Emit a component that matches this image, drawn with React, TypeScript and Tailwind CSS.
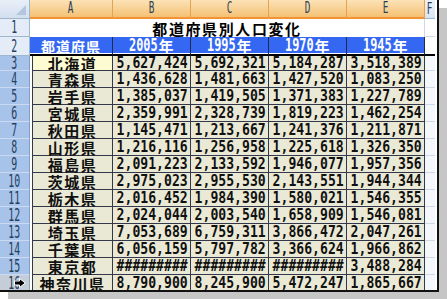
import React from "react";

const rows: string[][] = [
  ["北海道", "5,627,424", "5,692,321", "5,184,287", "3,518,389"],
  ["青森県", "1,436,628", "1,481,663", "1,427,520", "1,083,250"],
  ["岩手県", "1,385,037", "1,419,505", "1,371,383", "1,227,789"],
  ["宮城県", "2,359,991", "2,328,739", "1,819,223", "1,462,254"],
  ["秋田県", "1,145,471", "1,213,667", "1,241,376", "1,211,871"],
  ["山形県", "1,216,116", "1,256,958", "1,225,618", "1,326,350"],
  ["福島県", "2,091,223", "2,133,592", "1,946,077", "1,957,356"],
  ["茨城県", "2,975,023", "2,955,530", "2,143,551", "1,944,344"],
  ["栃木県", "2,016,452", "1,984,390", "1,580,021", "1,546,355"],
  ["群馬県", "2,024,044", "2,003,540", "1,658,909", "1,546,081"],
  ["埼玉県", "7,053,689", "6,759,311", "3,866,472", "2,047,261"],
  ["千葉県", "6,056,159", "5,797,782", "3,366,624", "1,966,862"],
  ["東京都", "#########", "#########", "#########", "3,488,284"],
  ["神奈川県", "8,790,900", "8,245,900", "5,472,247", "1,865,667"],
];

const years = ["2005", "1995", "1970", "1945"];

function HeadLabel({ t }: { t: string }) {
  return (
    <span className="inline-block origin-center scale-x-[0.62] font-['DejaVu_Sans_Mono',monospace] text-[15px] leading-none text-[#2a3f58]">
      {t}
    </span>
  );
}

function RowNum({ t }: { t: string }) {
  return (
    <span className="inline-block origin-center scale-x-[0.58] font-['DejaVu_Sans_Mono',monospace] text-[17px] leading-none text-[#24405e]">
      {t}
    </span>
  );
}

function Arrow() {
  return (
    <svg width="12" height="10" viewBox="0 0 12 10" className="absolute left-[14px] top-[3px]">
      <path d="M0.5 3 H5.5 V0.5 L11.3 5 L5.5 9.5 V7 H0.5 Z" fill="#000" stroke="#fff" strokeWidth="1" />
    </svg>
  );
}

export default function App() {
  return (
    <div className="w-[447px] h-[299px] bg-white overflow-hidden">
      <div className="w-[439px] h-[292px] bg-white border-r-2 border-b-2 border-[#111] shadow-[8px_8px_0_0_#c6c6c6] overflow-hidden">
        <div className="grid grid-cols-[30px_83px_78px_78px_78px_78px_10px] grid-rows-[19px_18px_19px_15px_repeat(12,17px)_17px]">
          {/* column header row */}
          <div className="relative bg-gradient-to-b from-[#e9eff8] to-[#d3dfee] border-r border-b border-[#9eb6ce]">
            <div className="absolute right-[3px] bottom-[3px] w-0 h-0 border-l-[10px] border-l-transparent border-b-[10px] border-b-[#b3c6df]" />
          </div>
          {["A", "B", "C", "D", "E"].map((c) => (
            <div
              key={c}
              className="flex items-center justify-center bg-gradient-to-b from-[#fbe2b6] to-[#f5c173] border-r border-[#e8a052] border-b-2 border-b-[#f29436]"
            >
              <HeadLabel t={c} />
            </div>
          ))}
          <div className="flex items-center justify-center bg-gradient-to-b from-[#eef3fa] to-[#dae4f1] border-b border-[#9eb6ce]">
            <HeadLabel t="F" />
          </div>

          {/* row 1 */}
          <div className="flex items-center justify-center bg-[#e4ecf7] border-r border-b border-[#9eb6ce]">
            <RowNum t="1" />
          </div>
          <div className="col-span-5 flex items-center justify-center bg-white border-r border-[#d0d7e5]">
            <span className="font-['Noto_Sans_CJK_JP',sans-serif] font-bold text-[15px] tracking-[1.6px] leading-none text-black">
              都道府県別人口変化
            </span>
          </div>
          <div className="bg-white border-b border-[#d0d7e5]" />

          {/* row 2 */}
          <div className="flex items-center justify-center bg-[#e4ecf7] border-r border-b border-[#9eb6ce]">
            <RowNum t="2" />
          </div>
          <div className="flex items-center justify-center bg-[#3468f3] border-r border-[#1f2b55] border-b-2 border-b-black shadow-[inset_0_-1px_0_#ffffff]">
            <span className="font-['Noto_Sans_CJK_JP',sans-serif] font-bold text-[14px] tracking-[1px] leading-none text-white">
              都道府県
            </span>
          </div>
          {years.map((y) => (
            <div
              key={y}
              className="flex items-center justify-center bg-[#3468f3] border-r border-[#1f2b55] border-b-2 border-b-black shadow-[inset_0_-1px_0_#ffffff]"
            >
              <span className="inline-flex items-center text-white leading-none">
                <span className="inline-block w-[29px]">
                  <span className="inline-block origin-left scale-x-[0.7] font-['DejaVu_Sans_Mono',monospace] font-bold text-[17px] leading-none">
                    {y}
                  </span>
                </span>
                <span className="font-['Noto_Sans_CJK_JP',sans-serif] font-bold text-[15px] leading-none">年</span>
              </span>
            </div>
          ))}
          <div className="bg-white border-b-2 border-black" />

          {/* data rows */}
          {rows.map((r, i) => {
            const n = i + 3;
            const last = n === 16;
            return (
              <React.Fragment key={n}>
                <div
                  className={
                    last
                      ? "relative flex items-center justify-center bg-[#c5cdd8] border-r border-[#8fa6c2]"
                      : "flex items-center justify-center bg-[#a7c3ea] border-r border-b border-r-[#7f9ec8] border-b-[#cbdaf0]"
                  }
                >
                  <RowNum t={String(n)} />
                  {last && <Arrow />}
                </div>
                <div
                  className={
                    "flex items-center justify-center ml-[2px] border-l border-r border-b border-[#34384a] " +
                    (n === 3 ? "bg-[#fdfbd2]" : "bg-[#eae9d5]")
                  }
                >
                  <span className="font-['Noto_Sans_CJK_JP',sans-serif] font-bold text-[15px] tracking-[1.5px] leading-none text-[#111]">
                    {r[0]}
                  </span>
                </div>
                {r.slice(1).map((v, j) => (
                  <div
                    key={j}
                    className="flex items-center justify-end pr-[2px] bg-[#eae9d5] border-r border-b border-[#34384a]"
                  >
                    <span className="inline-block whitespace-nowrap origin-right scale-x-[0.82] font-['DejaVu_Sans_Mono',monospace] font-bold text-[16px] leading-none text-[#111]">
                      {v}
                    </span>
                  </div>
                ))}
                <div className="bg-[#f4f7fb] border-b border-[#d0d7e5]" />
              </React.Fragment>
            );
          })}
        </div>
      </div>
    </div>
  );
}
